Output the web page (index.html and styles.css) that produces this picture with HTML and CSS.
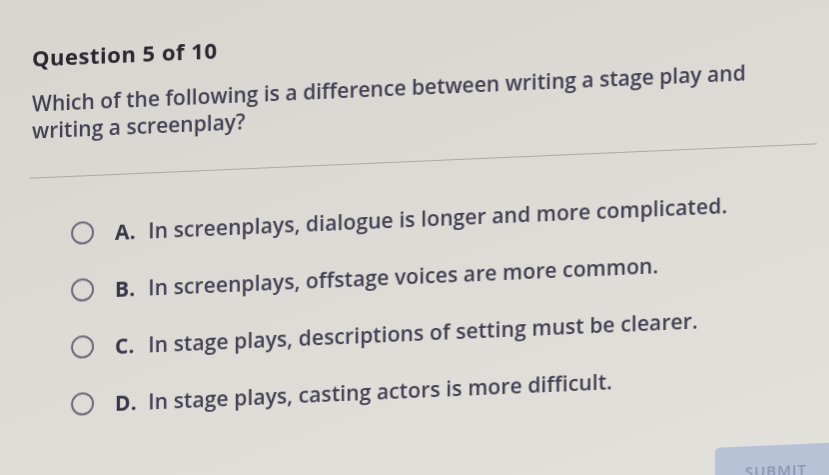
FILE: index.html
```html
<!DOCTYPE html>
<html lang="en">
<head>
  <meta charset="UTF-8">
  <meta name="viewport" content="width=device-width, initial-scale=1.0">
  <title>Question 5 of 10</title>
  <link rel="stylesheet" href="styles.css">
</head>
<body>

  <div class="quiz">
    <h1 class="quiz-title">Question 5 of 10</h1>
    <p class="question">Which of the following is a difference between writing a stage play and writing a screenplay?</p>

    <div class="divider"></div>

    <ul class="answers">
      <li class="answer">
        <span class="radio"></span>
        <span class="letter">A.</span>
        <span class="text">In screenplays, dialogue is longer and more complicated.</span>
      </li>
      <li class="answer">
        <span class="radio"></span>
        <span class="letter">B.</span>
        <span class="text">In screenplays, offstage voices are more common.</span>
      </li>
      <li class="answer">
        <span class="radio"></span>
        <span class="letter">C.</span>
        <span class="text">In stage plays, descriptions of setting must be clearer.</span>
      </li>
      <li class="answer">
        <span class="radio"></span>
        <span class="letter">D.</span>
        <span class="text">In stage plays, casting actors is more difficult.</span>
      </li>
    </ul>

    <div class="footer">
      <button class="btn-submit">SUBMIT</button>
    </div>
  </div>

</body>
</html>
```

FILE: styles.css
```css
body {
  margin: 0;
  padding: 0;
  height: 100vh;
  overflow: hidden;
  font-family: "Open Sans", "Liberation Sans", Arial, sans-serif;
  background: linear-gradient(160deg, #d6d5cf 0%, #dcdbd5 50%, #e2e1db 100%);
  color: #424154;
}
.quiz {
  padding: 46px 0 0 32px;
  transform: skewY(-2.5deg);
  transform-origin: 0 0;
  filter: blur(0.4px);
}
.quiz-title {
  margin: 0;
  font-size: 22px;
  line-height: 27px;
  font-weight: 700;
  letter-spacing: 0.5px;
  color: #29272f;
}
.question {
  margin: 19px 0 0 0;
  width: 725px;
  font-size: 21px;
  line-height: 27px;
  font-weight: 600;
  letter-spacing: 0;
}
.divider {
  margin: 33px 12px 0 -2px;
  height: 1px;
  background-color: #a9a9a7;
}
.answers {
  list-style: none;
  margin: 28px 0 0 0;
  padding: 0 0 0 39px;
}
.answer {
  display: flex;
  align-items: center;
  height: 57px;
  font-size: 21px;
  font-weight: 600;
  letter-spacing: 0.1px;
}
.radio {
  width: 19px;
  height: 19px;
  border: 2px solid #6e6d7c;
  border-radius: 50%;
  flex-shrink: 0;
}
.letter {
  margin-left: 21px;
  width: 33px;
  font-weight: 700;
  color: #383748;
}
.footer {
  display: flex;
  justify-content: flex-end;
  margin: 43px -8px 0 0;
}
.btn-submit {
  width: 122px;
  height: 50px;
  border: none;
  border-radius: 5px;
  background-color: #b8c2d7;
  color: #8994b2;
  font-family: "Open Sans", "Liberation Sans", Arial, sans-serif;
  font-size: 15px;
  font-weight: 600;
  letter-spacing: 1px;
}
```
